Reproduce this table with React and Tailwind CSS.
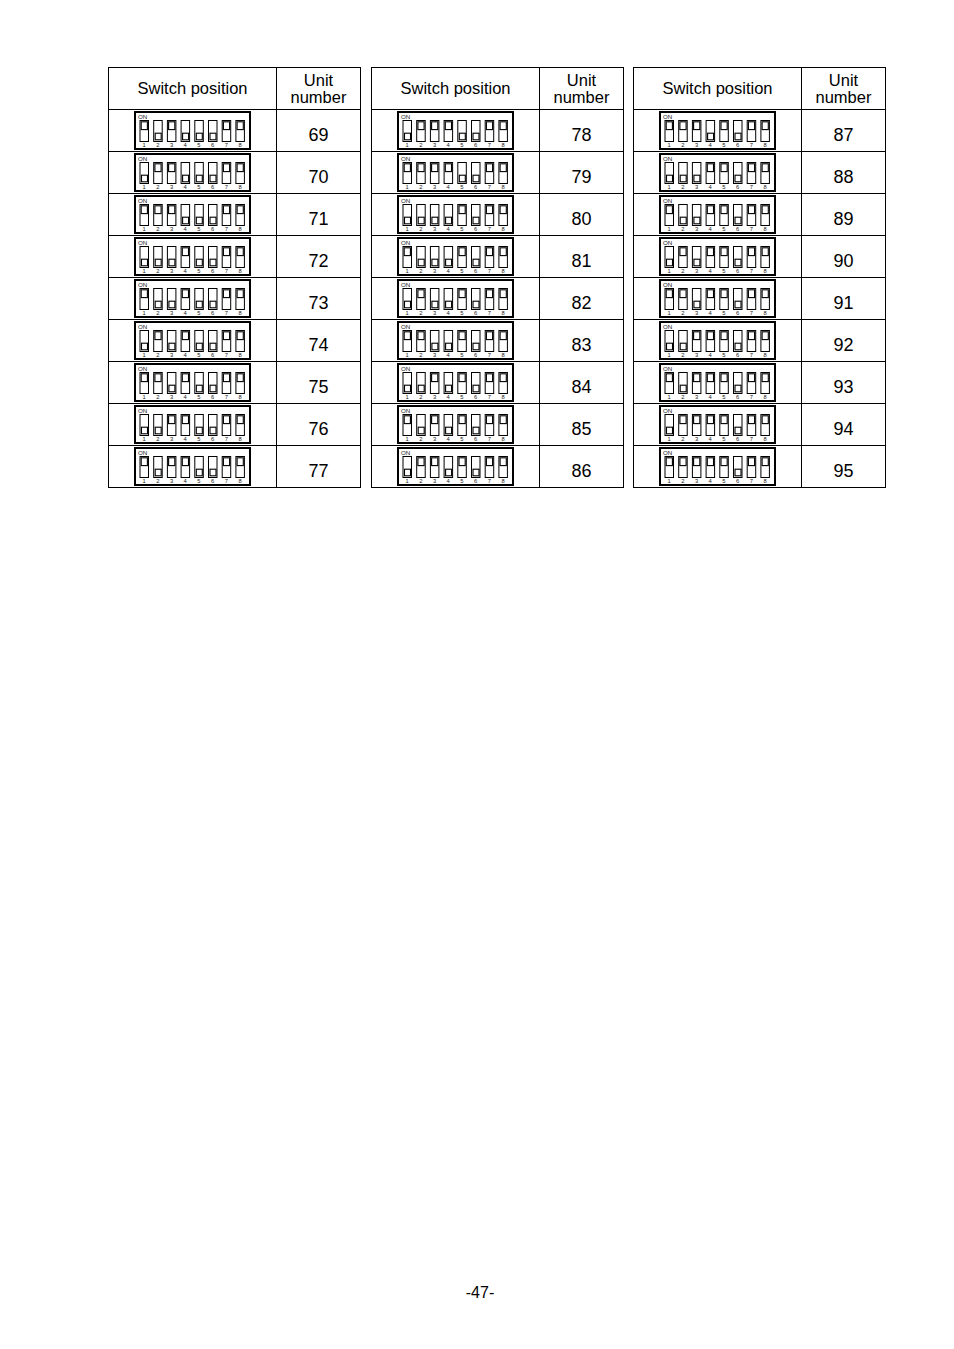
import React from "react";

const FONT = { fontFamily: '"Liberation Sans", Arial, Helvetica, sans-serif' };

function Dip({ n }) {
  const slots = [];
  for (let i = 0; i < 8; i++) {
    const up = i === 7 ? true : ((n >> i) & 1) === 1;
    const left = 5.5 + 13.7 * i;
    slots.push(
      <g key={i}>
        <rect x={left + 0.5} y={9.5} width={8.5} height={21} fill="white" stroke="black" strokeWidth={1} />
        {up ? (
          <rect x={left + 1.7} y={10.8} width={6.2} height={7.8} fill="white" stroke="black" strokeWidth={1.1} />
        ) : (
          <rect x={left + 2} y={22.2} width={6} height={6.6} fill="white" stroke="black" strokeWidth={1.1} />
        )}
        <text x={left + 4.6} y={35.8} fontSize={5.8} textAnchor="middle" fill="#222" style={FONT}>
          {i + 1}
        </text>
      </g>
    );
  }
  return (
    <svg width="117" height="39" viewBox="0 0 117 39" className="block">
      <rect x={1} y={1} width={115} height={37} fill="white" stroke="black" strokeWidth={2} />
      <text x={4} y={8} fontSize={6.2} fill="#222" style={FONT}>ON</text>
      {slots}
    </svg>
  );
}

function Table({ start, className }) {
  const rows = Array.from({ length: 9 }, (_, i) => start + i);
  return (
    <div className={"flex flex-col border-l border-t border-black w-[253px] " + className}>
      <div className="flex h-[42px]">
        <div className="w-[168px] border-r border-b border-black flex items-center justify-center text-[16.5px] text-black">
          Switch position
        </div>
        <div className="w-[84px] border-r border-b border-black flex items-center justify-center text-center text-[16.5px] leading-[17px] text-black pt-[1px]">
          Unit<br />number
        </div>
      </div>
      {rows.map((n) => (
        <div key={n} className="flex h-[42px]">
          <div className="w-[168px] border-r border-b border-black flex items-center justify-center">
            <Dip n={n} />
          </div>
          <div className="w-[84px] border-r border-b border-black flex items-center justify-center text-[18px] text-black pt-[9px]">
            {n}
          </div>
        </div>
      ))}
    </div>
  );
}

export default function App() {
  return (
    <div className="w-[954px] h-[1349px] bg-white flex flex-col" style={FONT}>
      <div className="flex pt-[67px] pl-[108px]">
        <Table start={69} className="" />
        <Table start={78} className="ml-[10px]" />
        <Table start={87} className="ml-[9px]" />
      </div>
      <div className="mt-[796px] text-center text-[16px] leading-[18px] text-black pl-[6px]">-47-</div>
    </div>
  );
}
